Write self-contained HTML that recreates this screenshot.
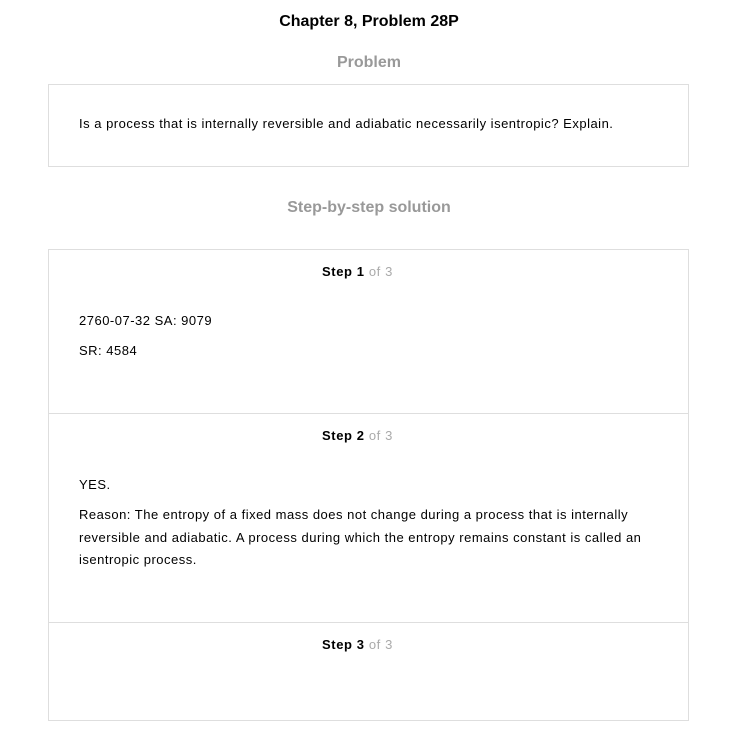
<!DOCTYPE html>
<html><head><style>
body{margin:0;width:738px;height:747px;background:#fff;font-family:"Liberation Sans",Arial,sans-serif;color:#000;position:relative}
.a{position:absolute;white-space:nowrap}
.box{position:absolute;border:1px solid #dedede;box-sizing:border-box}
.h{font-weight:bold;font-size:16px;color:#999;width:738px;text-align:center;left:0}
.t{font-size:13px;letter-spacing:0.5px}
.s{font-size:13px;left:322px;letter-spacing:0.6px}
.s b{font-weight:bold}
.s span{color:#aaa}
</style></head><body>
<div class="a" style="left:0;width:738px;text-align:center;top:13px;font-size:16px;font-weight:bold">Chapter 8, Problem 28P</div>
<div class="a h" style="top:54px">Problem</div>
<div class="box" style="left:48px;top:84px;width:641px;height:83px"></div>
<div class="a t" style="left:79px;top:116px">Is a process that is internally reversible and adiabatic necessarily isentropic? Explain.</div>
<div class="a h" style="top:199px">Step-by-step solution</div>
<div class="box" style="left:48px;top:249px;width:641px;height:472px"></div>
<div class="a" style="left:48px;top:413px;width:641px;height:1px;background:#dedede"></div>
<div class="a" style="left:48px;top:622px;width:641px;height:1px;background:#dedede"></div>
<div class="a s" style="top:264px"><b>Step 1</b> <span>of 3</span></div>
<div class="a t" style="left:79px;top:313px">2760-07-32 SA: 9079</div>
<div class="a t" style="left:79px;top:343px">SR: 4584</div>
<div class="a s" style="top:428px"><b>Step 2</b> <span>of 3</span></div>
<div class="a t" style="left:79px;top:477px">YES.</div>
<div class="a t" style="left:79px;top:504px;line-height:22.5px">Reason: The entropy of a fixed mass does not change during a process that is internally<br>reversible and adiabatic. A process during which the entropy remains constant is called an<br>isentropic process.</div>
<div class="a s" style="top:637px"><b>Step 3</b> <span>of 3</span></div>
</body></html>
